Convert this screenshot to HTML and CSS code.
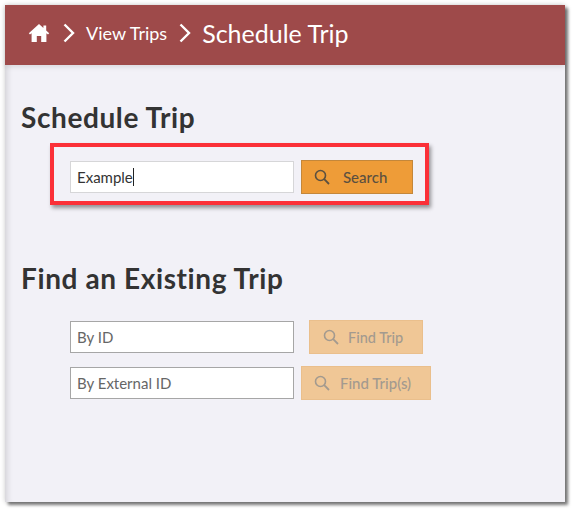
FILE: index.html
```html
<!DOCTYPE html>
<html lang="en">
  <head>
    <meta charset="UTF-8" />
    <meta name="viewport" content="width=device-width, initial-scale=1.0" />
    <title>Schedule Trip</title>
    <link rel="stylesheet" href="styles.css">
  </head>
  <body>
    <div class="panel">
      <header class="crumbs">
        <svg class="home-icon" viewBox="0 0 22 20" width="22" height="20">
          <path d="M11 1 L0.8 10.2 L2 11.6 L3.6 10.3 V19 H8.8 V13 H13.2 V19 H18.4 V10.3 L20 11.6 L21.2 10.2 L18.2 7.5 V2.5 H15.4 V5 Z" fill="#fff" />
        </svg>
        <svg class="chevron" viewBox="0 0 14 20" width="14" height="20">
          <path d="M2.5 1.5 L11 10 L2.5 18.5" fill="none" stroke="#fff" stroke-width="2.4" />
        </svg>
        <span class="crumb-link">View Trips</span>
        <svg class="chevron" viewBox="0 0 14 20" width="14" height="20">
          <path d="M2.5 1.5 L11 10 L2.5 18.5" fill="none" stroke="#fff" stroke-width="2.4" />
        </svg>
        <span class="crumb-current">Schedule Trip</span>
      </header>

      <section class="schedule">
        <h2>Schedule Trip</h2>
        <div class="highlight">
          <div class="search-row">
            <div class="field field-active">Example<span class="caret"></span></div>
            <button class="btn btn-search">
              <svg class="search-icon" viewBox="0 0 16 16" width="16" height="16">
                <circle cx="6.5" cy="6.5" r="5" fill="none" stroke="currentColor" stroke-width="1.6" />
                <path d="M10.2 10.2 L15 15" stroke="currentColor" stroke-width="1.8" />
              </svg>
              <span>Search</span>
            </button>
          </div>
        </div>
      </section>

      <section class="existing">
        <h2>Find an Existing Trip</h2>
        <div class="search-row">
          <div class="field">By ID</div>
          <button class="btn btn-disabled btn-find">
            <svg class="search-icon" viewBox="0 0 16 16" width="16" height="16">
              <circle cx="6.5" cy="6.5" r="5" fill="none" stroke="currentColor" stroke-width="1.6" />
              <path d="M10.2 10.2 L15 15" stroke="currentColor" stroke-width="1.8" />
            </svg>
            <span>Find Trip</span>
          </button>
        </div>
        <div class="search-row">
          <div class="field">By External ID</div>
          <button class="btn btn-disabled btn-find-ext">
            <svg class="search-icon" viewBox="0 0 16 16" width="16" height="16">
              <circle cx="6.5" cy="6.5" r="5" fill="none" stroke="currentColor" stroke-width="1.6" />
              <path d="M10.2 10.2 L15 15" stroke="currentColor" stroke-width="1.8" />
            </svg>
            <span>Find Trip(s)</span>
          </button>
        </div>
      </section>
    </div>
  </body>
</html>
```

FILE: styles.css
```css
body {
  box-sizing: border-box;
  height: 511px;
  margin: 0;
  padding: 5px 0 0 5px;
  overflow: hidden;
  background-color: #fff;
  font-family: Lato, "Open Sans", sans-serif;
  color: #333;
}
.panel {
  width: 560px;
  height: 497px;
  background-color: #f2f1f7;
  box-shadow: 3px 3px 3px rgba(0, 0, 0, 0.5), 0 0 5px rgba(0, 0, 0, 0.2), inset 7px 0 6px -5px rgba(0, 0, 0, 0.14);
}
.crumbs {
  display: flex;
  align-items: center;
  box-sizing: border-box;
  height: 60px;
  padding: 0 0 4px 23px;
  background-color: #9e4a4a;
  color: #fff;
  box-shadow: 0 2px 5px rgba(0, 0, 0, 0.1);
}
.home-icon {
  margin-right: 12px;
}
.chevron {
  margin-right: 10px;
}
.crumb-link {
  margin-right: 11px;
  font-size: 18px;
}
.crumb-current {
  font-size: 25px;
}
h2 {
  margin: 0;
  font-size: 28px;
  line-height: 34px;
  font-weight: 700;
  letter-spacing: 0.6px;
  color: #333;
}
.schedule {
  padding: 35px 0 0 16px;
}
.highlight {
  width: 355px;
  height: 41px;
  margin: 9px 0 0 29px;
  border: 4px solid #fb3038;
  box-shadow: 2px 3px 4px rgba(0, 0, 0, 0.4);
  padding: 13px 0 0 16px;
  box-sizing: content-box;
}
.search-row {
  display: flex;
  align-items: center;
  height: 34px;
}
.existing {
  padding: 56px 0 0 16px;
}
.existing .search-row {
  margin-left: 49px;
  margin-bottom: 12px;
}
.existing h2 {
  margin-bottom: 25px;
}
.field {
  display: flex;
  align-items: center;
  box-sizing: border-box;
  width: 224px;
  height: 32px;
  padding-left: 6px;
  background-color: #fff;
  border: 1px solid #a6a6a6;
  font-size: 15px;
  color: #666;
}
.field-active {
  border-color: #d6d6d8;
  color: #333;
}
.caret {
  display: inline-block;
  width: 1px;
  height: 18px;
  background-color: #222;
}
.btn {
  display: flex;
  align-items: center;
  box-sizing: border-box;
  height: 34px;
  padding: 0;
  border: 1px solid #c4873a;
  font-family: inherit;
  font-size: 15px;
  font-weight: 500;
}
.btn-search {
  width: 112px;
  margin-left: 7px;
  padding-left: 12px;
  background-color: #ee9c38;
  color: #5b5040;
}
.btn-search .search-icon {
  margin-right: 13px;
}
.btn-disabled {
  background-color: #f0c796;
  border-color: #eabf8c;
  color: #a39a8f;
}
.btn-find {
  width: 114px;
  margin-left: 15px;
  padding-left: 13px;
  font-size: 14.5px;
}
.btn-find-ext {
  width: 130px;
  margin-left: 7px;
  padding-left: 12px;
}
.btn-disabled .search-icon {
  margin-right: 9px;
}
.btn-find-ext .search-icon {
  margin-right: 10px;
}
```
